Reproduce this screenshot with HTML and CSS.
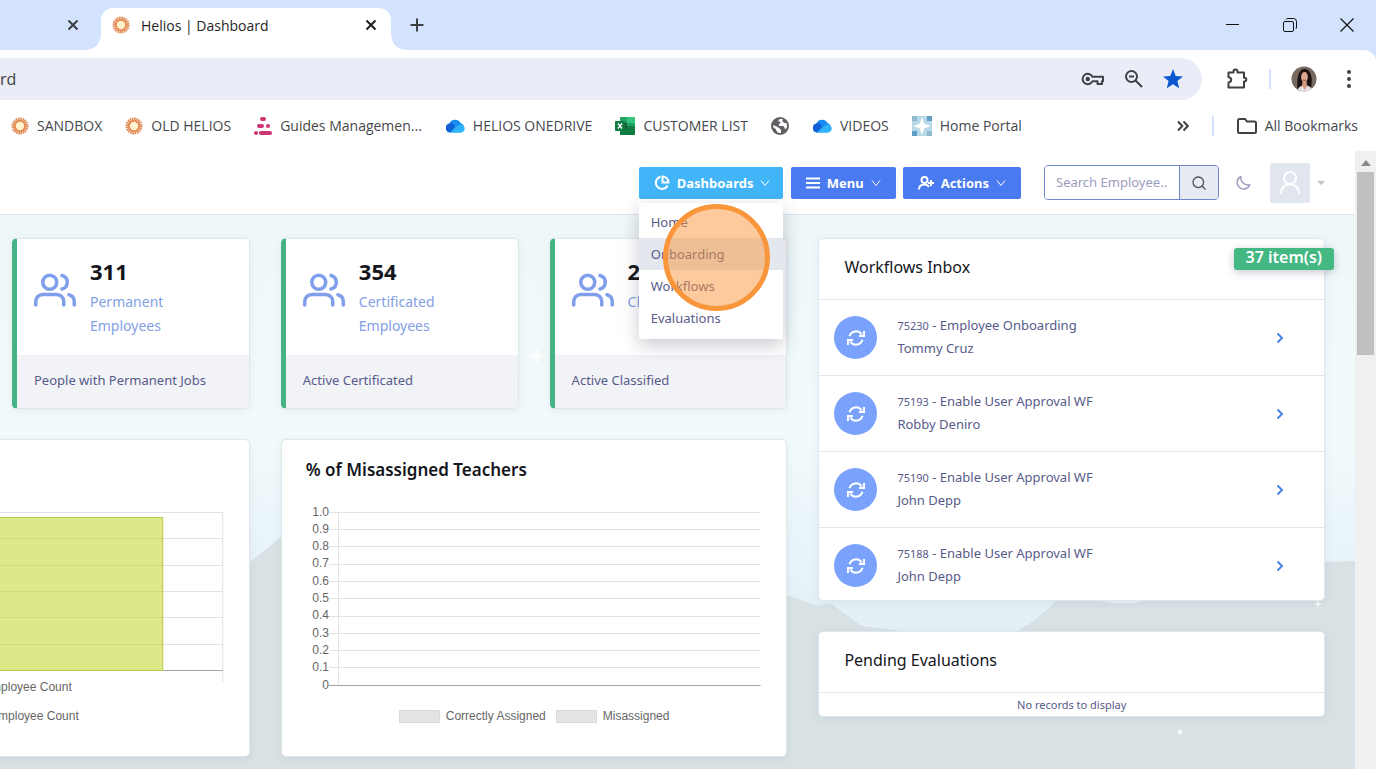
FILE: index.html
```
<!DOCTYPE html>
<html lang="en">
<head>
  <meta charset="UTF-8">
  <meta name="viewport" content="width=device-width, initial-scale=1.0">
  <title>Helios | Dashboard</title>
  <link rel="stylesheet" href="styles.css">
</head>
<body>
  <!-- shared icons -->
  <svg class="defs" aria-hidden="true">
    <symbol id="i-sun" viewBox="0 0 18 18">
      <circle cx="9" cy="9" r="7.2" fill="none" stroke="#df8a58" stroke-width="2.6" stroke-dasharray="1.6 0.66"/>
      <circle cx="9" cy="9" r="5.2" fill="#fff3cf" stroke="#e58d52" stroke-width="2"/>
    </symbol>
    <symbol id="i-cloud" viewBox="0 0 20 14">
      <path d="M5 13.5a4.6 4.6 0 0 1-.7-9A6.3 6.3 0 0 1 15.5 4a5 5 0 0 1 0 9.5z" fill="#1a8cf0"/>
      <path d="M5 13.500a4.600 4.600 0 0 1-.7-9C8 3.500 11 6 8.500 9.500z" fill="#0f5fd6"/>
      <path d="M5 13.500L13 6.500c3-2 7 .5 6.700 3.500-.3 2-2 3.500-4.200 3.500z" fill="#2fb4fb"/>
    </symbol>
    <symbol id="i-x" viewBox="0 0 12 12"><path d="M1.500 1.500l9 9m0-9l-9 9"/></symbol>
    <symbol id="i-users" viewBox="0 0 24 24">
      <circle cx="9" cy="7" r="4"/>
      <path d="M1 20v-2a4 4 0 0 1 4-4h8a4 4 0 0 1 4 4v2M23 20v-2a4 4 0 0 0-3-3.870M16 3.130a4 4 0 0 1 0 7.750"/>
    </symbol>
    <symbol id="i-sync" viewBox="0 0 20 20">
      <path d="M3.500 8.200a6.700 6.700 0 0 1 12.200-1.600M16.500 11.800a6.700 6.700 0 0 1-12.200 1.600"/>
      <path d="M18 3v5h-5M2 17v-5h5"/>
    </symbol>
    <symbol id="i-down" viewBox="0 0 10 10"><path d="M1 2.500l4 5 4-5"/></symbol>
    <symbol id="i-right" viewBox="0 0 10 12"><path d="M2.500 1.500L7 6l-4.500 4.500"/></symbol>
  </svg>

  <div class="tab-strip">
    <div class="tab tab-prev">
      <button class="icon-btn" aria-label="Close tab"><svg class="x" width="12" height="12"><use href="#i-x"/></svg></button>
    </div>
    <div class="tab tab-active">
      <svg width="18" height="18"><use href="#i-sun"/></svg>
      <span class="tab-title">Helios | Dashboard</span>
      <button class="icon-btn" aria-label="Close tab"><svg class="x dark" width="12" height="12"><use href="#i-x"/></svg></button>
    </div>
    <button class="icon-btn new-tab" aria-label="New tab"><svg width="14" height="14" viewBox="0 0 14 14"><path d="M7 .5v13M.5 7h13" stroke="#3c4043" stroke-width="2"/></svg></button>
    <div class="win-controls">
      <button class="icon-btn" aria-label="Minimize"><svg width="14" height="14" viewBox="0 0 14 14"><path d="M0 6.500h13" stroke="#111"/></svg></button>
      <button class="icon-btn" aria-label="Restore"><svg width="14" height="14" viewBox="0 0 14 14" fill="none" stroke="#111"><rect x=".5" y="3.500" width="10" height="10" rx="1.500"/><path d="M3 1.500Q3.500.5 5 .5h5.500q3 0 3 3V9q0 1.500-1 2"/></svg></button>
      <button class="icon-btn" aria-label="Close window"><svg width="14" height="14" viewBox="0 0 14 14"><path d="M.5.5l13 13m0-13l-13 13" stroke="#111" stroke-width="1.200"/></svg></button>
    </div>
  </div>

  <div class="toolbar">
    <div class="address">
      <input class="url" type="text" value="rd" aria-label="Address">
      <div class="address-icons">
        <button class="icon-btn" aria-label="Passwords"><svg width="24" height="14" viewBox="0 0 24 14" fill="none" stroke="#3f4144" stroke-width="2"><path d="M11.500 4.800H22v4.400h-1V12h-4.500V9.200h-5a5.200 5.200 0 1 1 0-4.400z" stroke-linejoin="round"/><circle cx="6.800" cy="7" r="1.200" fill="#3f4144"/></svg></button>
        <button class="icon-btn" aria-label="Zoom"><svg width="20" height="20" viewBox="0 0 20 20" fill="none" stroke="#3f4144" stroke-width="2"><circle cx="7.500" cy="7.500" r="5.500"/><path d="M11.500 11.500l6.500 6.500M5 7.500h5"/></svg></button>
        <button class="icon-btn" aria-label="Bookmark"><svg width="20" height="20" viewBox="0 0 20 20"><path d="M10 0l2.700 6.900 7.300.5-5.600 4.700 1.800 7.200L10 15.300l-6.200 4 1.800-7.200L0 7.400l7.300-.5z" fill="#0b57d0"/></svg></button>
      </div>
    </div>
    <button class="icon-btn ext" aria-label="Extensions"><svg width="22" height="22" viewBox="0 0 22 22"><path d="M2.500 4.500h5V3.500a2 2 0 0 1 4 0v1h6.500v5.300h.5a1.800 1.800 0 0 1 0 3.600H18v6.100H2.500v-5c3.600-.5 3.600-4.800 0-5.200z" fill="none" stroke="#3f4144" stroke-width="2" stroke-linejoin="round"/></svg></button>
    <span class="divider"></span>
    <svg class="profile" width="26" height="26" viewBox="0 0 26 26" role="img" aria-label="Profile">
      <clipPath id="avatar-clip"><circle cx="13" cy="13" r="12.500"/></clipPath>
      <g clip-path="url(#avatar-clip)">
        <rect width="26" height="26" fill="#77685e"/>
        <path d="M7 26C5 14 7 3 13.500 3S22 12 20 22z" fill="#1c1213"/>
        <path d="M6 26c1-5 4-6 7-7 4 0 8 2 9 7z" fill="#e6e3ee"/>
        <path d="M11.500 15h4l.5 5-2 4-3-4z" fill="#d29b80"/>
        <ellipse cx="13.500" cy="11" rx="3.400" ry="5" fill="#dca88d"/>
        <path d="M12 14q1.500 1 3 0" stroke="#a0413f" fill="none"/>
      </g>
    </svg>
    <button class="icon-btn" aria-label="Browser menu"><svg width="6" height="20" viewBox="0 0 6 20" fill="#3f4144"><circle cx="3" cy="3" r="2"/><circle cx="3" cy="10" r="2"/><circle cx="3" cy="17" r="2"/></svg></button>
  </div>

  <nav class="bookmarks">
    <a href="#"><svg width="18" height="18"><use href="#i-sun"/></svg>SANDBOX</a>
    <a href="#"><svg width="18" height="18"><use href="#i-sun"/></svg>OLD HELIOS</a>
    <a href="#"><svg width="18" height="18" viewBox="0 0 18 18" fill="#cf3474"><rect x="6" y="0" width="6" height="4" rx="2"/><rect x="3" y="7" width="7" height="4" rx="2"/><circle cx="14" cy="9" r="2"/><circle cx="2" cy="16" r="2"/><rect x="5" y="14" width="13" height="4" rx="2"/></svg>Guides Managemen...</a>
    <a href="#"><svg width="20" height="14"><use href="#i-cloud"/></svg>HELIOS ONEDRIVE</a>
    <a href="#"><svg width="20" height="18" viewBox="0 0 20 18"><rect x="5" y="0" width="15" height="18" rx="1" fill="#21a366"/><path d="M12 0h7a1 1 0 0 1 1 1v5h-8z" fill="#33c481"/><path d="M5 9h15v8a1 1 0 0 1-1 1H5z" fill="#107c41"/><path d="M5 6h7v6H5z" fill="#185c37"/><rect x="0" y="4" width="10" height="10" rx="1" fill="#107c41"/><path d="M3 6.500l4 5m0-5l-4 5" stroke="#fff" stroke-width="1.400"/></svg>CUSTOMER LIST</a>
    <a href="#" aria-label="Untitled site"><svg width="18" height="18" viewBox="0 0 18 18"><circle cx="9" cy="9" r="9" fill="#5f6164"/><path d="M9.500 2q-2.500.5-2 2.500h2q.5 2-1.500 2.500v2h4q1.500.5 1.500 2.500l1.800.3Q17 9 15.500 6h-2.700q0-1.500-1.300-1.500V2zM2 8q0 3.500 3 4v1.500q1 0 1.500 2 2 .8 3.500.3V13q-1.500-2-3.500-3z" fill="#fff"/></svg></a>
    <a href="#"><svg width="20" height="14"><use href="#i-cloud"/></svg>VIDEOS</a>
    <a href="#"><svg width="20" height="20" viewBox="0 0 20 20"><rect width="20" height="20" fill="#b7d8e6"/><path d="M0 0h5v5H0zM15 15h5v5h-5z" fill="#8fb9cf"/><path d="M15 0h5v5h-5zM0 15h5v5H0z" fill="#5d9fc2"/><path d="M10 1l2.300 6.700L19 10l-6.700 2.300L10 19l-2.300-6.700L1 10l6.700-2.300z" fill="#fff"/></svg>Home Portal</a>
    <button class="icon-btn more" aria-label="More bookmarks"><svg width="12" height="12" viewBox="0 0 12 12" fill="none" stroke="#3f4144" stroke-width="2"><path d="M1 1.500L5.300 6 1 10.500M6.500 1.500L10.800 6l-4.300 4.500"/></svg></button>
    <span class="divider"></span>
    <a href="#" class="all"><svg width="20" height="16" viewBox="0 0 20 16"><path d="M1 2.500A1.500 1.500 0 0 1 2.500 1H8l2 2.500h7.500A1.500 1.500 0 0 1 19 5v8.500a1.500 1.500 0 0 1-1.500 1.500h-15A1.500 1.500 0 0 1 1 13.500z" fill="none" stroke="#3f4144" stroke-width="2"/></svg>All Bookmarks</a>
  </nav>

  <div class="viewport">
    <div class="page">
      <header class="app-header">
        <div class="menu-wrap">
          <button class="btn btn-info">
            <svg width="16" height="16" viewBox="0 0 16 16" fill="none" stroke="#fff" stroke-width="2"><path d="M13.600 10.500A6.200 6.200 0 1 1 6.500 1.700"/><path d="M8.500 1.500v6h6A6 6 0 0 0 8.500 1.500z"/></svg>
            Dashboards
            <svg class="caret" width="10" height="10"><use href="#i-down"/></svg>
          </button>
          <ul class="dropdown">
            <li><a href="#">Home</a></li>
            <li><a href="#" class="hover">Onboarding</a></li>
            <li><a href="#">Workflows</a></li>
            <li><a href="#">Evaluations</a></li>
          </ul>
          <span class="click-marker"></span>
        </div>
        <button class="btn">
          <svg width="14" height="12" viewBox="0 0 14 12"><path d="M0 1.500h14M0 6h14M0 10.500h14" stroke="#fff" stroke-width="2"/></svg>
          Menu
          <svg class="caret" width="10" height="10"><use href="#i-down"/></svg>
        </button>
        <button class="btn">
          <svg width="16" height="14" viewBox="0 0 16 14" fill="none" stroke="#fff" stroke-width="2"><circle cx="6.500" cy="4" r="3"/><path d="M1 13.500q0-5 5.500-5 3 0 4.500 2.500M13 4v6M10 7h6"/></svg>
          Actions
          <svg class="caret" width="10" height="10"><use href="#i-down"/></svg>
        </button>
        <form class="search">
          <input type="text" placeholder="Search Employee.." aria-label="Search Employee">
          <button type="button" aria-label="Search"><svg width="14" height="14" viewBox="0 0 14 14" fill="none" stroke="#49505c" stroke-width="1.300"><circle cx="6.300" cy="6.300" r="5.300"/><path d="M10 10l3.500 3.500"/></svg></button>
        </form>
        <button class="icon-btn" aria-label="Dark mode"><svg width="16" height="16" viewBox="0 0 16 16"><path d="M6 1.500a6.500 6.500 0 1 0 8.700 8.200A7 7 0 0 1 6 1.500z" fill="none" stroke="#9a9dbd" stroke-width="1.400" stroke-linejoin="round"/></svg></button>
        <button class="icon-btn user" aria-label="Account">
          <span class="user-pic"><svg width="22" height="24" viewBox="0 0 22 24" fill="none" stroke="#fff" stroke-width="2"><circle cx="11" cy="7" r="6"/><path d="M1.500 23q1-9.500 9.500-9.500T20.500 23"/></svg></span>
          <svg width="8" height="4" viewBox="0 0 8 4"><path d="M0 0h8L4 4z" fill="#c3c5cc"/></svg>
        </button>
      </header>

      <main class="content">
        <svg class="scenery" viewBox="0 0 1355 554" preserveAspectRatio="none" aria-hidden="true">
          <path d="M0 420L120 380 249 348 281 322 420 270 620 310 787 380 818 391 830 388 862 411 900 416 1018 416q20-12 37-29t40-2q30 8 60-2 60-20 100-30 50-8 69-6l31-1V554H0z" fill="#d8e1e4"/>
          <path d="M537 132l2 7 5 2-5 2-2 7-2-7-5-2 5-2zM1318 384l1 4 4 1-4 1-1 4-1-4-4-1 4-1zM1180 514l3 3-3 3-3-3z" fill="#fff" fill-opacity=".8"/>
        </svg>

        <section class="card stat">
          <div class="stat-body">
            <svg class="users" width="42" height="42"><use href="#i-users"/></svg>
            <div><strong>311</strong><p>Permanent Employees</p></div>
          </div>
          <div class="stat-foot">People with Permanent Jobs</div>
        </section>
        <section class="card stat">
          <div class="stat-body">
            <svg class="users" width="42" height="42"><use href="#i-users"/></svg>
            <div><strong>354</strong><p>Certificated Employees</p></div>
          </div>
          <div class="stat-foot">Active Certificated</div>
        </section>
        <section class="card stat">
          <div class="stat-body">
            <svg class="users" width="42" height="42"><use href="#i-users"/></svg>
            <div><strong>2</strong><p>Classified Employees</p></div>
          </div>
          <div class="stat-foot">Active Classified</div>
        </section>

        <div class="side">
          <section class="card inbox">
            <h2>Workflows Inbox</h2>
            <span class="badge">37 item(s)</span>
            <ul>
              <li><span class="dot"><svg width="20" height="20"><use href="#i-sync"/></svg></span><div><small>75230</small> - Employee Onboarding<br>Tommy Cruz</div><a href="#" aria-label="Open"><svg width="10" height="12"><use href="#i-right"/></svg></a></li>
              <li><span class="dot"><svg width="20" height="20"><use href="#i-sync"/></svg></span><div><small>75193</small> - Enable User Approval WF<br>Robby Deniro</div><a href="#" aria-label="Open"><svg width="10" height="12"><use href="#i-right"/></svg></a></li>
              <li><span class="dot"><svg width="20" height="20"><use href="#i-sync"/></svg></span><div><small>75190</small> - Enable User Approval WF<br>John Depp</div><a href="#" aria-label="Open"><svg width="10" height="12"><use href="#i-right"/></svg></a></li>
              <li><span class="dot"><svg width="20" height="20"><use href="#i-sync"/></svg></span><div><small>75188</small> - Enable User Approval WF<br>John Depp</div><a href="#" aria-label="Open"><svg width="10" height="12"><use href="#i-right"/></svg></a></li>
            </ul>
          </section>
          <section class="card">
            <h2>Pending Evaluations</h2>
            <p class="empty">No records to display</p>
          </section>
        </div>

        <section class="card chart chart-count">
          <h3>&nbsp;</h3>
          <svg class="plot" width="100%" height="178">
            <g class="grid">
              <line x1="13%" x2="100%" y1="8.500" y2="8.500"/>
              <line x1="13%" x2="100%" y1="34.500" y2="34.500"/>
              <line x1="13%" x2="100%" y1="61.500" y2="61.500"/>
              <line x1="13%" x2="100%" y1="87.500" y2="87.500"/>
              <line x1="13%" x2="100%" y1="113.500" y2="113.500"/>
              <line x1="13%" x2="100%" y1="140.500" y2="140.500"/>
              <line x1="100%" x2="100%" y1="8" y2="178"/>
            </g>
            <line class="axis" x1="13%" x2="100%" y1="166.500" y2="166.500"/>
            <rect class="bar" x="27.800%" y="13.500" width="59%" height="153"/>
          </svg>
          <div class="x-label">Employee Count</div>
          <div class="legend"><i class="lime"></i>Employee Count</div>
        </section>

        <section class="card chart chart-wide">
          <h3>% of Misassigned Teachers</h3>
          <svg class="plot" width="100%" height="190">
            <g class="grid">
              <line x1="23" x2="100%" y1="8.500" y2="8.500"/>
              <line x1="23" x2="100%" y1="25.500" y2="25.500"/>
              <line x1="23" x2="100%" y1="42.500" y2="42.500"/>
              <line x1="23" x2="100%" y1="60.500" y2="60.500"/>
              <line x1="23" x2="100%" y1="77.500" y2="77.500"/>
              <line x1="23" x2="100%" y1="94.500" y2="94.500"/>
              <line x1="23" x2="100%" y1="112.500" y2="112.500"/>
              <line x1="23" x2="100%" y1="129.500" y2="129.500"/>
              <line x1="23" x2="100%" y1="146.500" y2="146.500"/>
              <line x1="23" x2="100%" y1="163.500" y2="163.500"/>
              <line x1="32.500" x2="32.500" y1="8" y2="181"/>
            </g>
            <line class="axis" x1="23" x2="100%" y1="181.500" y2="181.500"/>
            <g class="ticks">
              <text x="23" y="12">1.0</text>
              <text x="23" y="29">0.9</text>
              <text x="23" y="46">0.8</text>
              <text x="23" y="63">0.7</text>
              <text x="23" y="81">0.6</text>
              <text x="23" y="98">0.5</text>
              <text x="23" y="115">0.4</text>
              <text x="23" y="133">0.3</text>
              <text x="23" y="150">0.2</text>
              <text x="23" y="167">0.1</text>
              <text x="23" y="185">0</text>
            </g>
          </svg>
          <div class="legend"><i></i>Correctly Assigned<i></i>Misassigned</div>
        </section>
      </main>
    </div>
    <div class="scrollbar">
      <svg width="10" height="6" viewBox="0 0 10 6"><path d="M5 0l5 6H0z" fill="#8b8b8b"/></svg>
      <div class="thumb"></div>
    </div>
  </div>
</body>
</html>
```
FILE: styles.css
```
* {
  box-sizing: border-box;
}
body {
  margin: 0;
  height: 100vh;
  display: flex;
  flex-direction: column;
  overflow: hidden;
  background: #fff;
  font-family: "Noto Sans", sans-serif;
  font-size: 13px;
  color: #575b8a;
}
ul, p, h2, h3 {
  margin: 0;
  padding: 0;
  list-style: none;
}
a {
  color: inherit;
  text-decoration: none;
}
svg {
  flex-shrink: 0;
}
.defs {
  display: none;
}
.icon-btn {
  display: flex;
  align-items: center;
  border: none;
  background: none;
  padding: 0;
  cursor: pointer;
}

/* browser chrome */
.tab-strip {
  height: 50px;
  flex-shrink: 0;
  display: flex;
  background: #d3e2fd;
  font-family: "Open Sans", sans-serif;
}
.tab {
  display: flex;
  align-items: center;
}
.tab-prev {
  width: 101px;
  justify-content: flex-end;
  padding-right: 22px;
}
.tab-active {
  position: relative;
  width: 290px;
  margin-top: 8px;
  padding: 0 14px 8px 11px;
  border-radius: 12px 12px 0 0;
  background: #fff;
  color: #1f1f1f;
  font-size: 14px;
}
/* flared feet of the active tab */
.tab-active::before,
.tab-active::after {
  content: "";
  position: absolute;
  bottom: 0;
  width: 14px;
  height: 14px;
}
.tab-active::before {
  right: 100%;
  background: radial-gradient(circle at 0 0, transparent 13px, #fff 14px);
}
.tab-active::after {
  left: 100%;
  background: radial-gradient(circle at 100% 0, transparent 13px, #fff 14px);
}
.tab-title {
  flex: 1;
  padding-left: 11px;
}
.x {
  stroke: #3c4043;
  stroke-width: 2;
}
.x.dark {
  stroke: #1f1f1f;
}
.new-tab {
  padding-left: 19px;
}
.win-controls {
  display: flex;
  gap: 43px;
  margin-left: auto;
  padding-right: 22px;
}
.toolbar {
  height: 58px;
  flex-shrink: 0;
  display: flex;
  align-items: center;
  padding-right: 24px;
  border-radius: 0 12px 0 0;
  background: #fff;
  box-shadow: 12px -12px 0 #d3e2fd;
}
.address {
  flex: 1;
  height: 42px;
  display: flex;
  align-items: center;
  padding-right: 19px;
  border-radius: 0 21px 21px 0;
  background: #eaedf7;
}
.url {
  flex: 1;
  padding: 0;
  border: none;
  background: none;
  color: #3c4043;
  font: 16px "Open Sans", sans-serif;
}
.address-icons {
  display: flex;
  gap: 19px;
}
.ext {
  margin-left: 24px;
}
.divider {
  width: 2px;
  height: 20px;
  background: #d3e2fd;
}
.toolbar .divider {
  margin: 0 20px 0 21px;
}
.profile {
  margin-right: 29px;
}
.bookmarks {
  height: 43px;
  flex-shrink: 0;
  display: flex;
  align-items: center;
  gap: 23px;
  padding: 0 18px 8px 11px;
  font-family: "Open Sans", sans-serif;
  font-size: 14px;
  color: #45484c;
  white-space: nowrap;
}
.bookmarks a {
  display: flex;
  align-items: center;
  gap: 8px;
}
.more {
  margin-left: auto;
}

/* page */
.viewport {
  flex: 1;
  min-height: 0;
  display: flex;
}
.page {
  flex: 1;
  min-width: 0;
  display: flex;
  flex-direction: column;
  overflow: hidden;
}
.app-header {
  height: 64px;
  flex-shrink: 0;
  display: flex;
  align-items: center;
  justify-content: flex-end;
  padding-right: 30px;
  border-bottom: 1px solid #dfe5ee;
  background: #fff;
}
.menu-wrap {
  position: relative;
  z-index: 2;
}
.btn {
  height: 32px;
  display: flex;
  align-items: center;
  gap: 7px;
  margin-right: 7px;
  padding: 0 15px;
  border: none;
  border-radius: 2px;
  background: #4a7af0;
  color: #fff;
  font: bold 13px "Noto Sans", sans-serif;
  cursor: pointer;
}
.btn-info {
  width: 144px;
  margin-right: 8px;
  background: #41b5f7;
}
.caret {
  fill: none;
  stroke: #fff;
  stroke-width: 1;
}
.dropdown {
  position: absolute;
  top: 36px;
  left: 0;
  width: 144px;
  padding: 3px 0 5px;
  border-radius: 2px;
  background: #fff;
  box-shadow: 0 6px 18px rgba(40, 45, 70, 0.25);
}
.dropdown a {
  display: block;
  padding: 0 12px;
  line-height: 32px;
}
.dropdown .hover {
  background: #e3e8ef;
}
.click-marker {
  position: absolute;
  top: 37px;
  left: 24px;
  width: 107px;
  height: 107px;
  border: 5px solid #f9963b;
  border-radius: 50%;
  background: rgba(249, 150, 60, 0.5);
}
.search {
  display: flex;
  height: 35px;
  width: 175px;
  margin: 0 16px;
  border: 1px solid #6d87c9;
  border-radius: 4px;
  overflow: hidden;
}
.search input {
  flex: 1;
  min-width: 0;
  padding: 0 0 2px 11px;
  border: none;
  font: 13px "Noto Sans", sans-serif;
}
.search input::placeholder {
  color: #9a9dbd;
}
.search button {
  width: 39px;
  display: grid;
  place-items: center;
  padding: 0;
  border: none;
  border-left: 1px solid #6d87c9;
  background: #e6eaf2;
}
.user {
  gap: 7px;
  margin-left: 19px;
}
.user-pic {
  width: 40px;
  height: 40px;
  display: grid;
  place-items: center;
  border-radius: 2px;
  background: #e1e6ee;
}
.content {
  position: relative;
  flex: 1;
  display: grid;
  grid-template-columns: repeat(5, 1fr);
  grid-template-rows: auto 1fr;
  align-items: start;
  gap: 30px 31px;
  padding: 23px 30px 12px 12px;
  background: linear-gradient(#eff7f9, #f2fafc 40%, #e3f1f7 72%);
}
.scenery {
  position: absolute;
  inset: 0;
  width: 100%;
  height: 100%;
}
.card {
  position: relative;
  border: 1px solid #e0e7ec;
  border-radius: 5px;
  background: #fff;
  box-shadow: 0 2px 8px rgba(60, 90, 110, 0.08);
}
.stat {
  border-left: 5px solid #45b384;
}
.stat-body {
  display: flex;
  gap: 14px;
  height: 116px;
  padding: 15px 17px;
}
.users {
  margin-top: 16px;
  fill: none;
  stroke: #7f9fec;
  stroke-width: 2;
  stroke-linecap: round;
}
.stat strong {
  display: block;
  color: #14161c;
  font-size: 22px;
  line-height: 34px;
}
.stat p {
  padding-top: 2px;
  color: #829fe6;
  font-size: 14px;
  line-height: 24px;
}
.stat-foot {
  padding: 0 17px 3px;
  border-radius: 0 0 4px 0;
  background: #f2f3f7;
  line-height: 50px;
  white-space: nowrap;
}
.side {
  grid-column: 4 / 6;
  grid-row: 1 / 3;
  display: flex;
  flex-direction: column;
  gap: 30px;
}
.card h2 {
  padding: 0 0 4px 25px;
  color: #14161c;
  font-size: 16px;
  font-weight: normal;
  line-height: 56px;
}
.badge {
  position: absolute;
  top: 9px;
  right: -10px;
  padding: 0 12px 4px;
  border-radius: 3px;
  background: #43b883;
  color: #fff;
  font-size: 16px;
  font-weight: 600;
  line-height: 18px;
  box-shadow: 0 2px 8px rgba(60, 70, 110, 0.3);
}
.inbox ul {
  height: 301px;
  overflow: hidden;
}
.inbox li {
  height: 76px;
  display: flex;
  align-items: center;
  gap: 20px;
  padding: 0 39px 0 15px;
  border-top: 1px solid #e1e6ed;
  line-height: 23px;
}
.inbox li div {
  flex: 1;
  padding-bottom: 2px;
}
.inbox small {
  font-size: 11px;
}
.inbox li > a {
  display: flex;
  fill: none;
  stroke: #4a80e0;
  stroke-width: 2;
}
.dot {
  width: 43px;
  height: 43px;
  display: grid;
  place-items: center;
  border-radius: 50%;
  background: #7aa2fc;
  fill: none;
  stroke: #fff;
  stroke-width: 2;
}
.empty {
  border-top: 1px solid #e1e6ed;
  font-size: 11px;
  line-height: 23px;
  text-align: center;
}

/* charts */
.chart {
  height: 318px;
  padding: 14px 26px 0 24px;
  color: #666;
  font-family: "Liberation Sans", sans-serif;
  font-size: 12px;
}
.chart-count {
  margin-left: -269px; /* scrolled partly out of view */
}
.chart-wide {
  grid-column: 2 / 4;
}
.chart h3 {
  height: 50px;
  color: #14161c;
  font: 600 17px/32px "Noto Sans", sans-serif;
}
.plot {
  display: block;
  overflow: visible;
}
.grid {
  stroke: #e2e2e2;
}
.axis {
  stroke: #a5a5a5;
}
.bar {
  fill: rgba(190, 210, 20, 0.5);
  stroke: #b9c94f;
}
.ticks {
  fill: #666;
  text-anchor: end;
}
.x-label {
  padding-right: 151px;
  line-height: 10px;
  text-align: right;
}
.legend {
  display: flex;
  align-items: center;
  justify-content: center;
  height: 14px;
  margin-top: 15px;
  padding-right: 8px;
}
.legend i {
  width: 41px;
  height: 13px;
  margin: 0 6px 0 10px;
  border: 1px solid #dadada;
  background: #e4e4e4;
}
.legend .lime {
  background: #dce585;
}
.chart-count .legend {
  justify-content: flex-end;
  margin-top: 17px;
  padding-right: 144px;
}

.scrollbar {
  width: 21px;
  display: flex;
  flex-direction: column;
  align-items: center;
  gap: 6px;
  padding-top: 9px;
  background: #f0f0f0;
}
.thumb {
  width: 17px;
  height: 183px;
  background: #c0c0c0;
}
```
